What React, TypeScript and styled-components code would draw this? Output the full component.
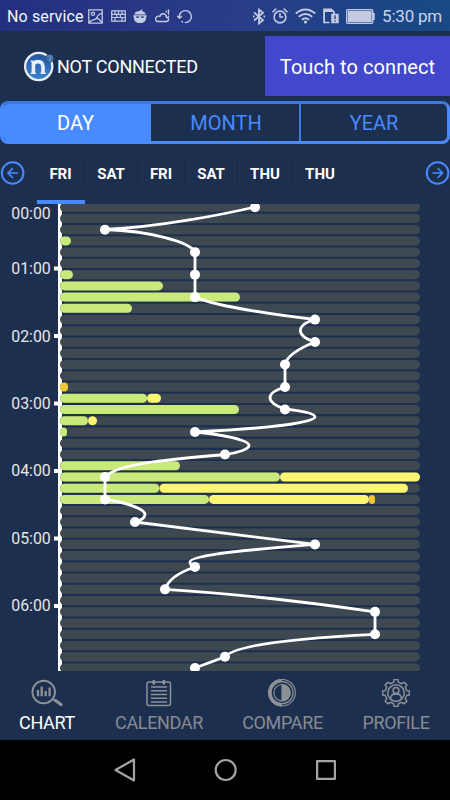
import React from "react";
import styled, { createGlobalStyle } from "styled-components";

const Global = createGlobalStyle`
  * { box-sizing: border-box; }
  body { margin: 0; background: #1d2f4f; font-family: Roboto, "Liberation Sans", sans-serif; }
  svg { display: block; flex: none; }
  button { font: inherit; border: 0; padding: 0; background: none; }
`;

const Screen = styled.div`
  width: 450px;
  height: 800px;
  display: flex;
  flex-direction: column;
  overflow: hidden;
  background: #1d2f4f;
  color: #fff;
`;

const StatusBar = styled.div`
  height: 31px;
  flex: none;
  display: flex;
  align-items: center;
  justify-content: space-between;
  padding: 1px 8px 0 7px;
  background: linear-gradient(100deg, #23307f 0%, #2a3c88 50%, #174a86 100%);
`;

const StatusGroup = styled.div<{ $gap: number }>`
  display: flex;
  align-items: center;
  gap: ${(p) => p.$gap}px;
  color: #c3cbe2;
`;

const Carrier = styled.span`
  font-size: 16px;
  letter-spacing: 0.13px;
  color: #f4f5fb;
  margin-right: -3px;
`;

const Clock = styled.span`
  font-size: 17px;
  letter-spacing: -0.22px;
  color: #c9d3e6;
`;

const Header = styled.header`
  height: 70px;
  flex: none;
  display: flex;
  justify-content: space-between;
  padding: 5px 0;
`;

const Connection = styled.div`
  display: flex;
  align-items: center;
  gap: 2px;
  padding-left: 23px;
  padding-top: 1px;
  font-size: 18px;
  letter-spacing: -0.25px;
`;

const ConnectButton = styled.button`
  width: 185px;
  background: #4148cb;
  color: #fff;
  font-size: 20px;
  letter-spacing: 0.07px;
  padding-top: 2px;
`;

const Tabs = styled.div`
  height: 43px;
  flex: none;
  display: grid;
  grid-template-columns: 148px 148px 1fr;
  border: 3px solid #488aff;
  border-top-color: #3c78df;
  border-radius: 8px;
  overflow: hidden;
`;

const Tab = styled.button<{ $active?: boolean }>`
  color: ${(p) => (p.$active ? "#fff" : "#488aff")};
  background: ${(p) => (p.$active ? "#488aff" : "transparent")};
  font-size: 20px;
  &:first-child { padding-right: 3px; }
  & + & { padding-left: 2px; }
  & + & + & { padding-left: 0; border-left: 2px solid #3f7ae5; }
`;

const DayStrip = styled.div`
  height: 60px;
  flex: none;
  display: flex;
  justify-content: space-between;
`;

const Arrow = styled.button`
  width: 25px;
  height: 24px;
  margin-top: 17px;
  color: #488aff;
`;

const Days = styled.div`
  flex: 1;
  display: flex;
  padding-left: 12px;
`;

const Day = styled.div<{ $width: number; $active?: boolean }>`
  width: ${(p) => p.$width}px;
  display: flex;
  flex-direction: column;
  justify-content: space-between;
  padding-top: 15px;
  border-bottom: 4px solid ${(p) => (p.$active ? "#488aff" : "transparent")};
  &:last-child span { border-right-color: transparent; }
`;

const DayName = styled.span`
  height: 29px;
  line-height: 31px;
  text-align: center;
  font-size: 15px;
  font-weight: 700;
  border-right: 1px solid #182742;
`;

const ChartArea = styled.main`
  height: 467px;
  flex: none;
`;

const HourLabel = styled.text`
  font-family: Roboto, sans-serif;
  font-size: 15.9px;
  fill: #e4e6ea;
  text-anchor: end;
`;

const TabBar = styled.nav`
  height: 69px;
  flex: none;
  display: grid;
  grid-template-columns: 94px 130px 117px 110px;
`;

const NavItem = styled.button<{ $active?: boolean }>`
  display: flex;
  flex-direction: column;
  align-items: center;
  padding-top: 8px;
  gap: 5px;
  font-size: 18px;
  line-height: 22px;
  letter-spacing: -0.35px;
  color: ${(p) => (p.$active ? "#fff" : "#878b91")};
  svg { color: #8c9198; }
`;

const SystemBar = styled.footer`
  height: 60px;
  flex: none;
  display: flex;
  justify-content: center;
  align-items: center;
  gap: 78px;
  background: #000;
  color: #a4a4a4;
`;

const stroke = { fill: "none", stroke: "currentColor", strokeLinecap: "round", strokeLinejoin: "round" } as const;

const PictureIcon = () => (
  <svg width="15" height="15" viewBox="0 0 15 15" {...stroke} strokeWidth="1.3" strokeLinecap="butt" strokeLinejoin="miter">
    <path d="M.8.8h13.4v13.4H.8zM1 14C4 9 8 12 9 8.500Q9.500 6 14 4" /><circle cx="5" cy="4.700" r="1.600" /><path d="M9 8.500l5 5" />
  </svg>
);
const KeyboardIcon = () => (
  <svg width="15" height="12" viewBox="0 0 15 12" {...stroke} strokeWidth="1.200" strokeLinecap="butt">
    <path d="M.7.8h13.600v10.400H.7zM1 4.300h13M1 7.500h13M4 1v3M7.500 1v3M11 1v3M5.700 4.300v3.200M9.300 4.300v3.200M4 7.500V11M11 7.500V11" />
  </svg>
);
const MaskIcon = () => (
  <svg width="14" height="14" viewBox="0 0 14 14" fill="currentColor">
    <path d="M1.500 5.500C1.600 2.500 4 2 6 2.200L9 .3l.2 2c2.300.7 3.200 1.400 3.400 3.200zM.3 6.300h13.400v1.500l-.7.6C13.200 12 11 14 7 14S.8 12 1 8.400l-.7-.6z" />
    <path d="M2.600 7.600h3.700c0 1.800-3.400 1.600-3.700 0zM7.700 7.600h3.700c-.3 1.600-3.700 1.800-3.700 0z" fill="#26377f" />
  </svg>
);
const CloudIcon = () => (
  <svg width="15" height="14" viewBox="0 0 15 14" {...stroke} strokeWidth="1.400">
    <path d="M2.800 12.500h8.500a2 2 0 00.2-4.200C11 4 6 3.500 5 7.300 2 6.500-.5 9 1 11.500q.7 1 1.800 1z" /><path d="M13.500 1v4M13.500 7.300v.3M11.200 2.200v.8" />
  </svg>
);
const SyncIcon = () => (
  <svg width="16" height="15" viewBox="0 0 16 15" {...stroke} strokeWidth="1.400">
    <path d="M2.500 9A6 6 0 118.300 13.600M.6 7.300l1.900 2 2-1.800M5.600 13l-.8-.5" />
  </svg>
);
const BluetoothIcon = () => (
  <svg width="12" height="17" viewBox="0 0 12 17" {...stroke} strokeWidth="1.800" strokeLinecap="butt" strokeLinejoin="miter">
    <path d="M1 4.300l9 8L6 15.400V1.600l4 3.100-9 8" /><path d="M0 8.500h1.500M10.500 8.500H12" />
  </svg>
);
const AlarmIcon = () => (
  <svg width="16" height="16" viewBox="0 0 16 16" {...stroke} strokeWidth="1.600">
    <circle cx="8" cy="9" r="5.900" /><path d="M8 5.700V9h2.700M1 3.800L3.800 1M15 3.800L12.200 1" />
  </svg>
);
const WifiIcon = () => (
  <svg width="21" height="16" viewBox="0 0 21 16" {...stroke} strokeWidth="2" strokeLinecap="butt">
    <path d="M.8 5.500Q10.500-2.500 20.200 5.500M3.800 8.700q6.700-5.400 13.400 0M6.900 11.700q3.600-2.800 7.200 0" /><circle cx="10.500" cy="14" r="1.600" fill="currentColor" stroke="none" />
  </svg>
);
const SimAlertIcon = () => (
  <svg width="16" height="16" viewBox="0 0 16 16" fill="currentColor">
    <path d="M.2.5h8.300l3.300 3.300v2H10V4H2v9.700h4.500v1.500H.2zM8.200 5.800h7.500v9.400H8.200z" /><path d="M12 7.300v4M12 12.500v1.300" stroke="#23448a" strokeWidth="1.400" />
  </svg>
);
const BatteryIcon = () => (
  <svg width="29" height="15" viewBox="0 0 29 15">
    <rect x=".7" y=".7" width="26" height="13.600" rx="1" fill="none" stroke="currentColor" strokeWidth="1.300" /><rect x="1.800" y="1.800" width="23.800" height="11.400" fill="currentColor" /><path d="M27 4h1.700v7H27z" fill="currentColor" />
  </svg>
);

const Logo = () => (
  <svg width="32" height="32" viewBox="0 0 32 32">
    <defs><linearGradient id="globe" x2="0" y2="1"><stop stopColor="#2354a0" /><stop offset="1" stopColor="#3a86d2" /></linearGradient></defs>
    <circle cx="15.700" cy="15.500" r="13.600" fill="url(#globe)" stroke="#e8edf3" strokeWidth="2.300" />
    <path d="M10.400 23V10.300M10.400 15Q10.400 10.600 15 10.600t5 5V23" fill="none" stroke="#e9f2fb" strokeWidth="3.600" />
    <path d="M7.700 10.300h3M7.700 22.400h5.300M17.500 22.400h5.300" stroke="#e9f2fb" strokeWidth="1.400" />
    <circle cx="26.800" cy="7.300" r="4.300" fill="#1d2f4f" /><circle cx="26.800" cy="7.300" r="3.300" fill="#2b65a8" stroke="#7f98b9" strokeWidth=".7" />
    <path d="M25.600 6.200q1.300-1.300 2.300 0 0 1-2 2.700h2.300" fill="none" stroke="#89b9dd" strokeWidth=".8" />
  </svg>
);

const ArrowIcon = ({ right }: { right?: boolean }) => (
  <svg width="25" height="24" viewBox="0 0 25 24" {...stroke} strokeWidth="2">
    <circle cx="12.600" cy="12" r="10.800" />
    <path strokeWidth="1.700" d={right ? "M8 12h9.500M13 7.500l4.500 4.500-4.500 4.500" : "M17.500 12H8M12.500 7.500L8 12l4.500 4.500"} />
  </svg>
);

const SearchChartIcon = () => (
  <svg width="32" height="28" viewBox="0 0 32 28" {...stroke} strokeWidth="1.900">
    <circle cx="12.700" cy="13" r="11.300" /><path strokeWidth="2.300" strokeLinecap="butt" d="M7 17.300V11M10.700 17.300V7.500M14.700 17.300V12M18.600 17.300V8.500" /><path d="M21.500 20l3 2" /><path strokeWidth="3.200" d="M24.500 21.500l5.500 4" />
  </svg>
);
const CalendarIcon = () => (
  <svg width="26" height="28" viewBox="0 0 26 28" {...stroke} strokeWidth="1.500">
    <rect x="1" y="3" width="23.500" height="23.500" rx="2" /><path strokeWidth="2.600" d="M7.800 2v2.500M17.800 2v2.500" /><path strokeWidth="1.400" d="M5.500 8h15M5.500 11.800h15M5.500 15.500h15M5.500 19.300h15M5.500 23h15" />
  </svg>
);
const CompareIcon = () => (
  <svg width="30" height="28" viewBox="0 0 30 28" {...stroke} strokeWidth="1.200">
    <circle cx="14" cy="13.700" r="13.300" /><circle cx="14" cy="13.700" r="11" /><circle cx="14" cy="13.700" r="8.200" />
    <path strokeWidth="3.200" strokeLinecap="butt" d="M14 1.500A12.200 12.200 0 0014 25.900" /><path d="M14 5.700a8 8 0 010 16z" fill="currentColor" />
  </svg>
);

const gearPath = (() => {
  const pts: string[] = [];
  for (let i = 0; i < 8; i++) {
    const a = (i * Math.PI) / 4 - Math.PI / 2;
    for (const [offset, radius] of [[-0.23, 10.900], [-0.14, 13.500], [0.14, 13.500], [0.23, 10.900]]) {
      pts.push(`${(14 + radius * Math.cos(a + offset)).toFixed(1)} ${(14 + radius * Math.sin(a + offset)).toFixed(1)}`);
    }
  }
  return `M${pts.join("L")}Z`;
})();
const ProfileIcon = () => (
  <svg width="28" height="28" viewBox="0 0 28 28" {...stroke} strokeWidth="1.500">
    <path d={gearPath} /><circle cx="14" cy="14" r="8.300" /><circle cx="14" cy="11.500" r="2.900" /><path d="M8.700 19.300c.5-3 2-4.200 3.700-4.200h3.200c1.700 0 3.200 1.200 3.700 4.200M12.300 14v1.500M15.700 14v1.500" />
  </svg>
);

const CHART_TOP = 204;
const ROW_PITCH = 11.24;
const rowCenter = (row: number) => 207.2 + row * ROW_PITCH;
const palette = { low: "#c9ea7a", mid: "#fdf671", high: "#f2c832" };

type Segment = { row: number; from: number; to: number; level: keyof typeof palette };
const segments: Segment[] = [
  { row: 3, from: 60, to: 71, level: "low" },
  { row: 6, from: 60, to: 73, level: "low" },
  { row: 7, from: 60, to: 163, level: "low" },
  { row: 8, from: 60, to: 240, level: "low" },
  { row: 9, from: 60, to: 132, level: "low" },
  { row: 16, from: 60, to: 68, level: "high" },
  { row: 17, from: 60, to: 147, level: "low" },
  { row: 17, from: 147, to: 161, level: "mid" },
  { row: 18, from: 60, to: 239, level: "low" },
  { row: 19, from: 60, to: 88, level: "low" },
  { row: 19, from: 88, to: 97, level: "mid" },
  { row: 20, from: 60, to: 67, level: "low" },
  { row: 23, from: 60, to: 180, level: "low" },
  { row: 24, from: 60, to: 280, level: "low" },
  { row: 24, from: 280, to: 420, level: "mid" },
  { row: 25, from: 60, to: 159.500, level: "low" },
  { row: 25, from: 159.500, to: 408, level: "mid" },
  { row: 26, from: 60, to: 209, level: "low" },
  { row: 26, from: 209, to: 369, level: "mid" },
  { row: 26, from: 369, to: 375, level: "high" },
];

const markers = [
  [255, 0], [105, 2], [195, 4], [195, 6], [195, 8], [315, 10], [315, 12], [285, 14], [285, 16], [285, 18], [195, 20],
  [225, 22], [105, 24], [105, 26], [135, 28], [315, 30], [195, 32], [165, 34], [375, 36], [375, 38], [225, 40], [195, 41],
];

const trend =
  "M255 207C225 214 160 227 105 229.500C150 231 190 242 195 252V296.800C205 302 240 310.500 315 319.500" +
  "C295.500 325 295.500 336 315 342C300 348 287 355 285 364.500V387C265 393 265 402 285 409" +
  "C303 411 315 413.500 315 417C315 422 275 428 195 432C220 434 249 440 249 445.500C249 449 238 453 225 454.500" +
  "C175 459 118 463 105 477V499.500C125 502 145 509 145 514.500C145 518 140 521 135 522L315 544.400" +
  "C270 548 190 554 190 562Q190 566 195 567C180 572 168 580 165 589.300C225 593 300 601 375 611.800V634.300" +
  "C300 638 235 645 225 656.800L195 668";

const Chart = () => (
  <svg width="450" height="467" viewBox={`0 ${CHART_TOP} 450 467`}>
    <rect x="58" y={CHART_TOP} width="4" height="467" fill="#fff" />
    {Array.from({ length: 42 }, (_, i) => (
      <rect key={i} x="60" y={rowCenter(i) - 4.600} width="360" height="9.200" rx="4.600" fill="#3d4850" />
    ))}
    {segments.map((s) => (
      <rect key={`${s.row}-${s.from}`} x={s.from} y={rowCenter(s.row) - 4.500} width={s.to - s.from} height="9" rx={Math.min(4.500, (s.to - s.from) / 2)} fill={palette[s.level]} />
    ))}
    {Array.from({ length: 7 }, (_, hour) => (
      <g key={hour}>
        {hour > 0 && <rect x="54" y={199 + hour * 67.500} width="6" height="4" fill="#fff" />}
        <HourLabel x="50.800" y={hour === 0 ? 218.900 : 206.600 + hour * 67.450}>{`0${hour}:00`}</HourLabel>
      </g>
    ))}
    <path d={trend} fill="none" stroke="#fff" strokeWidth="2.800" />
    {markers.map(([x, row]) => <circle key={row} cx={x} cy={rowCenter(row)} r="5" fill="#fff" />)}
  </svg>
);

const days = [["FRI", 48], ["SAT", 53], ["FRI", 47], ["SAT", 53], ["THU", 55], ["THU", 55]] as const;

export default function App() {
  return (
    <Screen>
      <Global />
      <StatusBar>
        <StatusGroup $gap={7.5}>
          <Carrier>No service</Carrier>
          <PictureIcon /><KeyboardIcon /><MaskIcon /><CloudIcon /><SyncIcon />
        </StatusGroup>
        <StatusGroup $gap={7}>
          <BluetoothIcon /><AlarmIcon /><WifiIcon /><SimAlertIcon /><BatteryIcon />
          <Clock>5:30 pm</Clock>
        </StatusGroup>
      </StatusBar>
      <Header>
        <Connection><Logo />NOT CONNECTED</Connection>
        <ConnectButton>Touch to connect</ConnectButton>
      </Header>
      <Tabs>
        <Tab $active>DAY</Tab>
        <Tab>MONTH</Tab>
        <Tab>YEAR</Tab>
      </Tabs>
      <DayStrip>
        <Arrow><ArrowIcon /></Arrow>
        <Days>
          {days.map(([name, width], i) => (
            <Day key={i} $width={width} $active={i === 0}><DayName>{name}</DayName></Day>
          ))}
        </Days>
        <Arrow><ArrowIcon right /></Arrow>
      </DayStrip>
      <ChartArea><Chart /></ChartArea>
      <TabBar>
        <NavItem $active><SearchChartIcon />CHART</NavItem>
        <NavItem><CalendarIcon />CALENDAR</NavItem>
        <NavItem><CompareIcon />COMPARE</NavItem>
        <NavItem><ProfileIcon />PROFILE</NavItem>
      </TabBar>
      <SystemBar>
        <svg width="22" height="24" viewBox="0 0 22 24" {...stroke} strokeWidth="2.200"><path d="M20 1.500v21L1.500 12z" /></svg>
        <svg width="24" height="24" viewBox="0 0 24 24" {...stroke} strokeWidth="2.200"><circle cx="11.700" cy="12" r="10" /></svg>
        <svg width="20" height="20" viewBox="0 0 20 20" {...stroke} strokeWidth="2.200"><rect x="1.100" y="1.100" width="17.800" height="17.800" /></svg>
      </SystemBar>
    </Screen>
  );
}
